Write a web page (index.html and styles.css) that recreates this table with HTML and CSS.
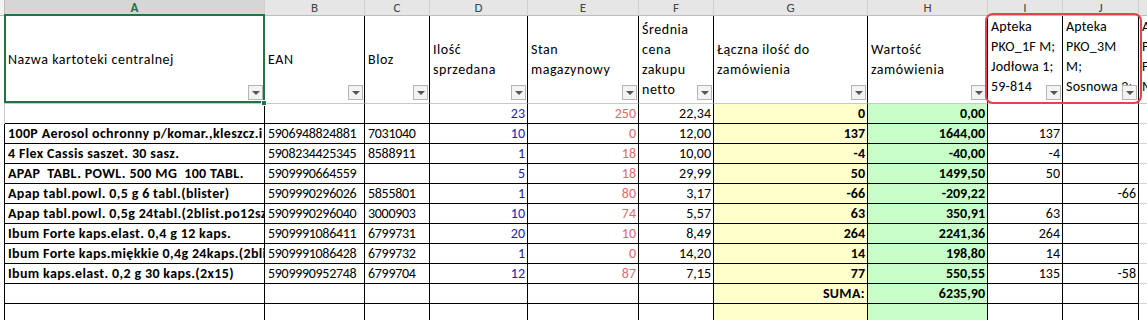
FILE: index.html
```html
<!DOCTYPE html>
<html lang="pl">
<head>
<meta charset="utf-8">
<title>Arkusz</title>
<link rel="stylesheet" href="styles.css">
</head>
<body>
<div class="sheet">
  <!-- column letters -->
  <div class="ch corner"></div>
  <div class="ch ch-sel">A</div>
  <div class="ch">B</div>
  <div class="ch">C</div>
  <div class="ch">D</div>
  <div class="ch">E</div>
  <div class="ch">F</div>
  <div class="ch">G</div>
  <div class="ch">H</div>
  <div class="ch">I</div>
  <div class="ch">J</div>
  <div class="ch"></div>

  <!-- row 1: headers -->
  <div class="rh rh-top"></div>
  <div class="hd sel"><div class="ht">Nazwa kartoteki centralnej</div><span class="dd"></span><span class="handle"></span></div>
  <div class="hd"><div class="ht">EAN</div><span class="dd"></span></div>
  <div class="hd"><div class="ht">Bloz</div><span class="dd"></span></div>
  <div class="hd"><div class="ht">Ilość<br>sprzedana</div><span class="dd"></span></div>
  <div class="hd"><div class="ht">Stan<br>magazynowy</div><span class="dd"></span></div>
  <div class="hd"><div class="ht">Średnia<br>cena<br>zakupu<br>netto</div><span class="dd"></span></div>
  <div class="hd"><div class="ht">Łączna ilość do<br>zamówienia</div><span class="dd"></span></div>
  <div class="hd"><div class="ht">Wartość<br>zamówienia</div><span class="dd"></span></div>
  <div class="hd hd-top"><div class="ht">Apteka<br>PKO_1F M;<br>Jodłowa 1;<br>59-814</div><span class="dd"></span></div>
  <div class="hd hd-top"><div class="ht">Apteka<br>PKO_3M<br>M;<br>Sosnowa 2;</div><span class="dd"></span></div>
  <div class="hd hd-top hd-k"><div class="ht">Apteka<br>PKO_2<br>Filia<br>M;</div></div>

  <!-- row 2: totals -->
  <div class="rh rh-top"></div>
  <div class="c"></div>
  <div class="c"></div>
  <div class="c"></div>
  <div class="c n blue">23</div>
  <div class="c n red">250</div>
  <div class="c n">22,34</div>
  <div class="c n b yel">0</div>
  <div class="c n b grn">0,00</div>
  <div class="c"></div>
  <div class="c"></div>
  <div class="c k"></div>

  <!-- row 3 -->
  <div class="rh"></div>
  <div class="c b t">100P Aerosol ochronny p/komar.,kleszcz.i</div>
  <div class="c d">5906948824881</div>
  <div class="c d">7031040</div>
  <div class="c n blue">10</div>
  <div class="c n red">0</div>
  <div class="c n">12,00</div>
  <div class="c n b yel">137</div>
  <div class="c n b grn">1644,00</div>
  <div class="c n">137</div>
  <div class="c n"></div>
  <div class="c k"></div>

  <!-- row 4 -->
  <div class="rh"></div>
  <div class="c b t">4 Flex Cassis saszet. 30 sasz.</div>
  <div class="c d">5908234425345</div>
  <div class="c d">8588911</div>
  <div class="c n blue">1</div>
  <div class="c n red">18</div>
  <div class="c n">10,00</div>
  <div class="c n b yel">-4</div>
  <div class="c n b grn">-40,00</div>
  <div class="c n">-4</div>
  <div class="c n"></div>
  <div class="c k"></div>

  <!-- row 5 -->
  <div class="rh"></div>
  <div class="c b t">APAP  TABL. POWL. 500 MG  100 TABL.</div>
  <div class="c d">5909990664559</div>
  <div class="c d"></div>
  <div class="c n blue">5</div>
  <div class="c n red">18</div>
  <div class="c n">29,99</div>
  <div class="c n b yel">50</div>
  <div class="c n b grn">1499,50</div>
  <div class="c n">50</div>
  <div class="c n"></div>
  <div class="c k"></div>

  <!-- row 6 -->
  <div class="rh"></div>
  <div class="c b t">Apap tabl.powl. 0,5 g 6 tabl.(blister)</div>
  <div class="c d">5909990296026</div>
  <div class="c d">5855801</div>
  <div class="c n blue">1</div>
  <div class="c n red">80</div>
  <div class="c n">3,17</div>
  <div class="c n b yel">-66</div>
  <div class="c n b grn">-209,22</div>
  <div class="c n"></div>
  <div class="c n">-66</div>
  <div class="c k"></div>

  <!-- row 7 -->
  <div class="rh"></div>
  <div class="c b t">Apap tabl.powl. 0,5g 24tabl.(2blist.po12sz</div>
  <div class="c d">5909990296040</div>
  <div class="c d">3000903</div>
  <div class="c n blue">10</div>
  <div class="c n red">74</div>
  <div class="c n">5,57</div>
  <div class="c n b yel">63</div>
  <div class="c n b grn">350,91</div>
  <div class="c n">63</div>
  <div class="c n"></div>
  <div class="c k"></div>

  <!-- row 8 -->
  <div class="rh"></div>
  <div class="c b t">Ibum Forte kaps.elast. 0,4 g 12 kaps.</div>
  <div class="c d">5909991086411</div>
  <div class="c d">6799731</div>
  <div class="c n blue">20</div>
  <div class="c n red">10</div>
  <div class="c n">8,49</div>
  <div class="c n b yel">264</div>
  <div class="c n b grn">2241,36</div>
  <div class="c n">264</div>
  <div class="c n"></div>
  <div class="c k"></div>

  <!-- row 9 -->
  <div class="rh"></div>
  <div class="c b t">Ibum Forte kaps.miękkie 0,4g 24kaps.(2bli</div>
  <div class="c d">5909991086428</div>
  <div class="c d">6799732</div>
  <div class="c n blue">1</div>
  <div class="c n red">0</div>
  <div class="c n">14,20</div>
  <div class="c n b yel">14</div>
  <div class="c n b grn">198,80</div>
  <div class="c n">14</div>
  <div class="c n"></div>
  <div class="c k"></div>

  <!-- row 10 -->
  <div class="rh"></div>
  <div class="c b t">Ibum kaps.elast. 0,2 g 30 kaps.(2x15)</div>
  <div class="c d">5909990952748</div>
  <div class="c d">6799704</div>
  <div class="c n blue">12</div>
  <div class="c n red">87</div>
  <div class="c n">7,15</div>
  <div class="c n b yel">77</div>
  <div class="c n b grn">550,55</div>
  <div class="c n">135</div>
  <div class="c n">-58</div>
  <div class="c k"></div>

  <!-- row 11 -->
  <div class="rh"></div>
  <div class="c"></div>
  <div class="c"></div>
  <div class="c"></div>
  <div class="c"></div>
  <div class="c"></div>
  <div class="c"></div>
  <div class="c n b t yel">SUMA:</div>
  <div class="c n b grn">6235,90</div>
  <div class="c"></div>
  <div class="c"></div>
  <div class="c k"></div>

  <!-- row 12 -->
  <div class="rh"></div>
  <div class="c"></div>
  <div class="c"></div>
  <div class="c"></div>
  <div class="c"></div>
  <div class="c"></div>
  <div class="c"></div>
  <div class="c yel"></div>
  <div class="c grn"></div>
  <div class="c"></div>
  <div class="c"></div>
  <div class="c k"></div>

  <div class="highlight"></div>
</div>
</body>
</html>
```

FILE: styles.css
```css
* { box-sizing: border-box; }

html, body {
  margin: 0;
  padding: 0;
  background: #ffffff;
  overflow: hidden;
}

body {
  font-family: Carlito, Lato, "Liberation Sans", sans-serif;
  font-size: 14px;
  color: #000;
}

.sheet {
  position: relative;
  display: grid;
  grid-template-columns: 5px 260px 100px 65px 98px 111px 75px 154px 120px 75px 76px 100px;
  grid-template-rows: 16px 88px repeat(11, 20px);
  width: 1239px;
}

/* column letter header */
.ch {
  background: #e6e6e6;
  border-right: 1px solid #d0d0d0;
  border-bottom: 1px solid #bdbdbd;
  color: #444;
  font-size: 13px;
  line-height: 15px;
  text-align: center;
}
.ch.corner {
  background: #f2f2f2;
  border-right: 1px solid #bdbdbd;
}
.ch.ch-sel {
  background: #d6d6d6;
  color: #217346;
  font-weight: bold;
}

/* row header sliver */
.rh {
  border-right: 1px solid #000;
  background: #fff;
}
.rh.rh-top {
  border-right-color: #c8c8c8;
}

/* row 1 header cells */
.hd {
  position: relative;
  display: flex;
  align-items: center;
  border-right: 1px solid #000;
  border-bottom: 1px solid #c8c8c8;
  padding: 0 3px;
  font-size: 14px;
  line-height: 20px;
  letter-spacing: 0.55px;
}
.hd .ht {
  white-space: nowrap;
}
.hd-top {
  align-items: flex-start;
  padding-top: 1px;
  overflow: hidden;
  letter-spacing: 0.2px;
}
.hd-k {
  border-right: none;
}

.dd {
  position: absolute;
  right: 1px;
  bottom: 3px;
  width: 15px;
  height: 15px;
  border: 1px solid #b4b4b4;
  background: #f3f3f3;
}
.dd::after {
  content: "";
  position: absolute;
  left: 3px;
  top: 5px;
  border-left: 4px solid transparent;
  border-right: 4px solid transparent;
  border-top: 4px solid #555;
}

/* selection on A1 */
.sel::after {
  content: "";
  position: absolute;
  left: -1px;
  top: -2px;
  right: -1px;
  bottom: 0;
  border: 2px solid #217346;
  pointer-events: none;
}
.handle {
  position: absolute;
  right: -3px;
  bottom: -3px;
  width: 6px;
  height: 6px;
  background: #217346;
  border: 1px solid #fff;
  z-index: 2;
}

/* data cells */
.c {
  border-right: 1px solid #000;
  border-bottom: 1px solid #000;
  padding: 0 3px;
  font-size: 14px;
  line-height: 19px;
  white-space: pre;
  overflow: hidden;
  letter-spacing: 0;
}
.c.t { letter-spacing: 0.35px; }
.c.d { letter-spacing: -0.3px; }
.c.k {
  border-right: none;
  border-bottom-color: #d4d4d4;
}
.n { text-align: right; padding-right: 2px; }
.b { font-weight: bold; }
.blue { color: #2323a8; }
.red { color: #e06a6a; }
.yel { background: #ffffcc; }
.grn { background: #c8ffc8; }

.highlight {
  position: absolute;
  left: 985px;
  top: 13px;
  width: 157px;
  height: 91px;
  border: 2px solid #e8424a;
  border-radius: 8px;
  pointer-events: none;
}
```
